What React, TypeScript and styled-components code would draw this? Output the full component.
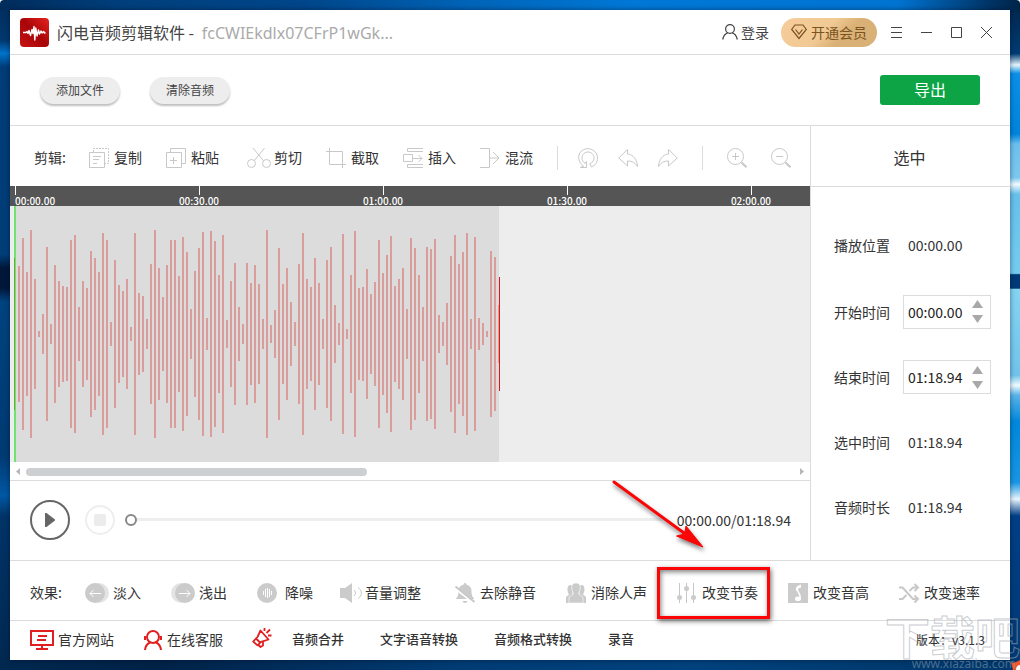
import React, { useState } from "react";
import styled, { createGlobalStyle, css } from "styled-components";

const GlobalStyle = createGlobalStyle`
  *, *::before, *::after { box-sizing: border-box; }
  body {
    margin: 0;
    font-family: "Noto Sans CJK SC", sans-serif;
    font-size: 14px;
    line-height: 20px;
    color: #333;
  }
  button, input { font: inherit; color: inherit; }
  button { padding: 0; border: 0; background: none; cursor: pointer; }
  svg { display: block; flex: none; overflow: visible; }
`;

const line = "#dcdcdc";

/* ---------- desktop and window ---------- */

const Desktop = styled.div`
  position: relative;
  display: flex;
  min-height: 100vh;
  padding: 10px;
  overflow: hidden;
  border-radius: 4px 4px 0 0;
  background:
    linear-gradient(90deg, #002850 0, #002247 15%, #003c74 45%, #00427e 68%, #003a6e 88%, #00386c 100%) bottom / 100% 10px no-repeat,
    linear-gradient(90deg, #002c5c 0, #003f7c 12%, #00468a 30%, #0064b8 46%, #0078d7 62%, #0074d2 88%, #003466 97%, #002448 100%) top / 100% 10px no-repeat,
    linear-gradient(180deg, #002c5c 0, #00386e 6%, #0074cc 8%, #003c78 10%, #003e78 38%, #00173a 40%, #00173a 43%, #00437f 45%, #003a72 68%, #0058a4 74%, #003468 77%, #002850 100%) left / 10px 100% no-repeat,
    linear-gradient(180deg, #002448 0, #003c74 8%, #e4f6ff 9.7%, #0a90e8 11%, #0084dc 20%, #6cc0ee 21.5%, #7cc8f0 26.5%, #f0fbff 27.5%, #66c0ec 29%, #74ccf0 40.8%, #003a78 41%, #003a78 43%, #84d4f2 43.2%, #70c4ec 56%, #f0fbff 57.5%, #58b4e8 59%, #0088dc 63%, #1896e4 72%, #e8f6ff 74.5%, #003f86 77%, #003a74 100%) right / 10px 100% no-repeat,
    #003a72;
`;

const Window = styled.main`
  display: flex;
  flex: 1;
  flex-direction: column;
  min-width: 0;
  background: #fff;
  box-shadow: 0 0 5px rgba(0, 10, 30, 0.5);
`;

const TitleBar = styled.header`
  display: flex;
  align-items: center;
  height: 45px;
  padding: 0 9px 0 10px;
  border-bottom: 1px solid ${line};
`;

const Title = styled.h1`
  flex: 1;
  margin: 0 0 0 8px;
  font-size: 16px;
  font-weight: 400;
  line-height: 24px;
  color: #444;
  white-space: nowrap;
`;

const FileName = styled.span`
  margin-left: 4px;
  font-family: "Noto Sans", sans-serif;
  color: #aaa;
`;

const LoginButton = styled.button`
  display: flex;
  align-items: center;
  gap: 3px;
  margin-right: 12px;
  color: #444;
`;

const VipButton = styled.button`
  display: flex;
  align-items: center;
  justify-content: center;
  gap: 4px;
  width: 96px;
  height: 29px;
  margin-right: 4px;
  border-radius: 15px;
  background: linear-gradient(135deg, #f6cd9b 0%, #f1c994 45%, #d9b075 65%, #d9b075 100%);
  color: #7a5320;
`;

const WindowButton = styled.button`
  display: grid;
  place-items: center;
  width: 30px;
  height: 30px;
  color: #444;
`;

const FileBar = styled.section`
  display: flex;
  align-items: center;
  gap: 30px;
  height: 71px;
  padding: 0 30px;
  border-bottom: 1px solid ${line};
`;

const PillButton = styled.button`
  width: 80px;
  height: 27px;
  border-radius: 14px;
  background: #ededed;
  box-shadow: 0 2px 2px rgba(0, 0, 0, 0.25);
  font-size: 12px;
  color: #444;
`;

const ExportButton = styled.button`
  width: 100px;
  height: 30px;
  margin-left: auto;
  padding-bottom: 2px;
  border-radius: 3px;
  background: #0ca445;
  font-size: 16px;
  color: #fff;
`;

const Workspace = styled.div`
  display: flex;
  flex: 1;
  min-height: 0;
`;

const Editor = styled.section`
  display: flex;
  flex: 1;
  flex-direction: column;
  min-width: 0;
`;

/* ---------- tool rows ---------- */

const EditBar = styled.div`
  display: flex;
  align-items: center;
  height: 60px;
  padding: 4px 0 0 24px;
`;

const EffectBar = styled.section`
  display: flex;
  align-items: center;
  height: 60px;
  padding: 5px 20px 0;
  border-top: 1px solid ${line};
`;

const RowLabel = styled.span`
  flex: none;
  width: 32px;
  margin-right: 23px;
  padding-bottom: 2px;
`;

const Caption = styled.span`
  padding-bottom: 2px;
`;

const ToolGroup = styled.div<{ $gap: number }>`
  display: flex;
  align-items: center;
  gap: ${(p) => p.$gap}px;
`;

const ToolButton = styled.button<{ $marked?: boolean }>`
  display: flex;
  flex: none;
  align-items: center;
  gap: 5px;
  height: 20px;
  white-space: nowrap;
  ${(p) =>
    p.$marked &&
    css`
      position: relative;
      &::after {
        content: "";
        position: absolute;
        inset: -16px -12px -16px -20px;
        border: 3px solid #fb0506;
        box-shadow: 1px 2px 5px rgba(0, 0, 0, 0.6), inset 1px 2px 5px rgba(0, 0, 0, 0.5);
      }
    `}
`;

const Pointer = styled.svg`
  position: absolute;
  left: -64px;
  top: -102px;
  z-index: 2;
  filter: drop-shadow(1px 3px 2px rgba(0, 0, 0, 0.5));
  pointer-events: none;
`;

const Divider = styled.span`
  width: 1px;
  height: 24px;
  background: ${line};
`;

/* ---------- timeline ---------- */

const Ruler = styled.div`
  display: flex;
  height: 20px;
  padding-left: 5px;
  overflow-x: clip;
  background: #555;
`;

const Mark = styled.div<{ $first: boolean }>`
  display: flex;
  flex: none;
  flex-direction: column;
  align-items: ${(p) => (p.$first ? "flex-start" : "center")};
  width: ${(p) => (p.$first ? 92 : 184)}px;
  font-size: 10px;
  font-weight: 500;
  line-height: 11px;
  color: #fff;

  &::before {
    content: "";
    width: 1px;
    height: 9px;
    background: #fff;
  }
`;

const WaveArea = styled.div`
  display: flex;
  flex: 1;
  min-height: 256px;
  padding-left: 4px;
  overflow: hidden;
  background: #ededed;
`;

const Selection = styled.div`
  display: flex;
  align-items: center;
  width: 485px;
  border-left: 2px solid #70e270;
  background: #dcdcdc;
`;

const ScrollRow = styled.div`
  display: flex;
  align-items: center;
  height: 18px;
`;

const ScrollArrow = styled.button`
  display: grid;
  place-items: center;
  width: 16px;
  height: 18px;
`;

const ScrollTrack = styled.div`
  flex: 1;
  padding-top: 2px;
`;

const ScrollThumb = styled.div`
  width: calc(44% + 3px);
  height: 8px;
  border-radius: 4px;
  background: #cecfd1;
`;

const Player = styled.div`
  display: flex;
  align-items: center;
  height: 80px;
  padding: 0 19px 2px 20px;
  border-top: 1px solid ${line};
`;

const PlayButton = styled.button`
  display: grid;
  place-items: center;
  width: 40px;
  height: 40px;
  border: 2px solid #666;
  border-radius: 50%;
`;

const StopButton = styled.button`
  display: grid;
  place-items: center;
  width: 30px;
  height: 30px;
  margin: 0 10px 0 15px;
  border: 2px solid #eee;
  border-radius: 50%;

  &::before {
    content: "";
    width: 12px;
    height: 12px;
    border-radius: 2px;
    background: #ececec;
  }
`;

const Seek = styled.input`
  flex: 1;
  min-width: 0;
  height: 12px;
  margin: 0 14px 0 0;
  appearance: none;
  background: linear-gradient(#eee, #eee) center / 100% 3px no-repeat;

  &::-webkit-slider-thumb {
    appearance: none;
    width: 12px;
    height: 12px;
    border: 2px solid #888;
    border-radius: 50%;
    background: #fff;
  }
`;

/* ---------- side panel ---------- */

const Side = styled.aside`
  display: flex;
  flex: none;
  flex-direction: column;
  width: 200px;
  border-left: 1px solid ${line};
`;

const SideTitle = styled.h2`
  margin: 0;
  padding: 21px 2px 19px 0;
  border-bottom: 1px solid ${line};
  font-size: 16px;
  font-weight: 400;
  line-height: 20px;
  text-align: center;
`;

const FieldList = styled.div`
  display: flex;
  flex: 1;
  flex-direction: column;
  justify-content: space-between;
  padding: 42px 19px 35px 23px;
`;

const Field = styled.div<{ $plain?: boolean }>`
  display: flex;
  align-items: center;
  justify-content: space-between;
  height: 34px;
  padding-bottom: ${(p) => (p.$plain ? 2 : 0)}px;
`;

const Value = styled.output`
  width: 83px;
`;

const Spinner = styled.div`
  display: flex;
  width: 88px;
  height: 34px;
  border: 1px solid ${line};
`;

const TimeInput = styled.input`
  width: 68px;
  padding: 0 0 0 4px;
  border: 0;
  outline: 0;
  background: transparent;
  color: #222;
`;

const Steps = styled.div`
  display: flex;
  flex-direction: column;
  justify-content: center;
  gap: 7px;
`;

/* ---------- footer ---------- */

const Footer = styled.footer`
  display: flex;
  align-items: center;
  height: 40px;
  padding: 0 25px 2px 20px;
  border-top: 1px solid ${line};
`;

const FooterLinks = styled.nav<{ $gap: number }>`
  display: flex;
  align-items: center;
  gap: ${(p) => p.$gap}px;
`;

const IconLink = styled.a<{ $gap: number }>`
  display: flex;
  align-items: center;
  gap: ${(p) => p.$gap}px;
  height: 20px;
  color: #333;
  text-decoration: none;
`;

const TextLink = styled.a`
  padding-bottom: 2px;
  font-size: 13px;
  font-weight: 500;
  color: #333;
  text-decoration: none;
`;

const Promo = styled.span`
  margin: 0 20px 4px 29px;
`;

const Version = styled.span`
  position: relative;
  z-index: 1;
  margin-left: auto;
  font-size: 12px;
`;

const Watermark = styled.div`
  position: absolute;
  right: 0;
  bottom: 4px;
  font-size: 45px;
  font-weight: 700;
  line-height: 60px;
  color: transparent;
  -webkit-text-stroke: 1px rgba(165, 170, 178, 0.6);
  white-space: nowrap;
  pointer-events: none;
`;

const WatermarkUrl = styled.div`
  position: absolute;
  right: 4px;
  bottom: 0;
  font-family: "Noto Sans", sans-serif;
  font-size: 12px;
  line-height: 12px;
  color: rgba(150, 165, 185, 0.5);
  white-space: nowrap;
  pointer-events: none;
`;

const Badge = styled.svg`
  position: absolute;
  right: 0;
  bottom: 0;
`;

/* ---------- icons ---------- */

type GlyphProps = { w?: number; x?: number; children: React.ReactNode };

const Glyph = ({ w = 20, x = 0, children }: GlyphProps) => (
  <svg width={w} height="20" viewBox={`${x} 0 ${w} 20`} fill="none" stroke="#c8c8c8" aria-hidden="true">
    {children}
  </svg>
);

const CopyIcon = () => (
  <Glyph>
    <path d="M.5 4.5h15v15H.5zM4 8.500h8M4 11.500h6M4 15.500h4" />
    <path d="M4.500 4V.5h15v15H16" strokeDasharray="2 1" />
  </Glyph>
);
const PasteIcon = () => (
  <Glyph>
    <path d="M.5 4.500h15v15H.5zM4.500 4.500v-4h15v15h-4M4 12.500h7M7.500 9v7" />
  </Glyph>
);
const CutIcon = () => (
  <Glyph w={26} x={-4}>
    <path d="M6 0l10.500 12.800M17.500 0L7 12.800" />
    <circle cx="4.500" cy="15.500" r="4" />
    <circle cx="19.500" cy="15.500" r="4" />
  </Glyph>
);
const CropIcon = () => (
  <Glyph>
    <path d="M3.500 0v16.500H20M0 3.500h16.500V20" />
  </Glyph>
);
const InsertIcon = () => (
  <Glyph>
    <path d="M20 .5H4.500v3H20M20 19.500H4.500v-3H20M.5 6.500h9v7h-9zM10 10.500h9M15.500 7l3.500 3.500-3.500 3.500" />
  </Glyph>
);
const MixIcon = () => (
  <Glyph>
    <path d="M0 .5h9.500v19H0M9.500 10H19M13 4l6 6-6 6" />
  </Glyph>
);
const ResetIcon = () => (
  <Glyph>
    <path d="M5.500 18C-1 13.500-1 4.800 5.500 1.600 11-1 19.500 2 19.500 10c0 4.500-2.500 7.500-6 9l-1.700-3.300C14.500 14.500 16 13 16 10c0-8-12-8-12 0 0 2 1 4 3 5.500L8.500 13.500v6H2.500z" />
  </Glyph>
);
const UndoIcon = () => (
  <Glyph>
    <path d="M.7 10L9.500 1.500V6c5.500.5 9.500 5 10 12.500-2.500-4-5.500-5.500-10-5.500v5z" />
  </Glyph>
);
const RedoIcon = () => (
  <Glyph>
    <path d="M19.300 10L10.500 1.500V6C5 6.500 1 11 .5 18.500 3 14.500 6 13 10.500 13v5z" />
  </Glyph>
);
const ZoomIcon = ({ plus }: { plus?: boolean }) => (
  <Glyph>
    <circle cx="8.500" cy="8.500" r="8" />
    <path d={plus ? "M5 8.500h7M8.500 5v7" : "M5 8.500h7"} />
    <path d="M14.500 14.500l5 4.800" strokeWidth="2" />
  </Glyph>
);

const FadeInIcon = () => (
  <Glyph w={23}>
    <g stroke="none">
      <circle cx="14" cy="10" r="10" fill="#e4e4e4" />
      <circle cx="10" cy="10" r="10" fill="#cbcbcb" />
    </g>
    <path d="M16 10.500H5M8.500 7L5 10.500 8.500 14" stroke="#fff" />
  </Glyph>
);
const FadeOutIcon = () => (
  <Glyph w={23}>
    <g stroke="none">
      <circle cx="10" cy="10" r="10" fill="#e4e4e4" />
      <circle cx="14" cy="10" r="10" fill="#cbcbcb" />
    </g>
    <path d="M8 10.500h11M15.500 7l3.500 3.500-3.500 3.500" stroke="#fff" />
  </Glyph>
);
const DenoiseIcon = () => (
  <Glyph w={23}>
    <circle cx="10" cy="10" r="10" fill="#cbcbcb" stroke="none" />
    <path d="M6.500 8v4M8.500 6v8M10.500 5v10M12.500 6v8M14.500 8v4" stroke="#fff" />
  </Glyph>
);
const VolumeIcon = () => (
  <Glyph w={17} x={3}>
    <path d="M0 5h5l7-5v20l-7-5H0z" fill="#cbcbcb" stroke="none" />
    <path d="M14 7c2 1.500 2 4.500 0 6M18 4.500c4.500 3 4.500 8 0 11" />
  </Glyph>
);
const MuteIcon = () => (
  <Glyph w={24} x={-4}>
    <path d="M10 0c1 0 1.500.8 1.500 1.800C15 2.500 16.500 5 16.500 8c0 4 .8 6 3 8H.5c2.200-2 3-4 3-8 0-3 1.500-5.500 5-6.200C8.500.8 9 0 10 0zM7.500 18h5c-.5 2.500-4.500 2.500-5 0z" fill="#cbcbcb" stroke="none" />
    <path d="M-.5 4.500l19.500 15" stroke="#fff" strokeWidth="3" />
    <path d="M.5 3.500l19 15.500" strokeWidth="2" />
  </Glyph>
);
const VoiceIcon = () => (
  <Glyph>
    <g fill="#cbcbcb" stroke="none">
      <path d="M4.500 2C6.500 2 7 3 7 5l-.5 5.500L9 13v7H0v-6l3-2.500C1 8.500.5 2 4.500 2zM15.500 2C13.500 2 13 3 13 5l.5 5.500L11 13v7h9v-6l-3-2.500c2-3 2.500-9.500-1.500-9.500z" />
      <path d="M10 0c4 0 4.500 3 4 6-.3 2.500-1 4-1.500 5l4.500 3v6H3v-6l4.500-3C7 10 6.300 8.500 6 6c-.5-3 0-6 4-6z" stroke="#fff" strokeWidth=".6" />
    </g>
  </Glyph>
);
const TempoIcon = () => (
  <Glyph>
    <path d="M2.500 0v20M9.500 0v20M16.500 0v20" />
    <g fill="#cbcbcb" stroke="none">
      <circle cx="2.500" cy="14.500" r="2.500" />
      <circle cx="9.500" cy="5.500" r="2.500" />
      <circle cx="16.500" cy="14.500" r="2.500" />
    </g>
  </Glyph>
);
const PitchIcon = () => (
  <Glyph>
    <path d="M0 0h20v20H0z" fill="#cbcbcb" stroke="none" />
    <path d="M9.300 6c0 3 3 4.500 3 8.500" stroke="#fff" strokeWidth="1.500" />
    <ellipse cx="10" cy="15.800" rx="3" ry="2.300" fill="#fff" stroke="none" />
    <path d="M7.800 7C7.800 3.500 10 2.500 13 1.500V4.500c-2 .5-3.500 1-3.600 4z" fill="#fff" stroke="none" />
  </Glyph>
);
const SpeedIcon = () => (
  <Glyph>
    <g strokeWidth="2">
      <path d="M0 4.500h3.500L14 16h4M0 16h3.500l4-4M10.500 8l3.500-3.500h4" />
      <path d="M15.500 1l3.500 3.500L15.500 8M15.500 12.500L19 16l-3.500 3.500" />
    </g>
  </Glyph>
);

const Logo = () => (
  <svg width="29" height="29" viewBox="0 0 29 29" aria-hidden="true">
    <defs>
      <linearGradient id="logo" x1="0" y1="1" x2="1" y2="0">
        <stop offset="0" stopColor="#c81414" />
        <stop offset=".5" stopColor="#a80508" />
        <stop offset="1" stopColor="#e62320" />
      </linearGradient>
    </defs>
    <rect width="29" height="29" rx="4" fill="url(#logo)" />
    <path d="M3 14.500h3l1-1 1 2 1-3 1.500 5 1.500-6 1 4 1-7 .8 13.500 1-12 1.200 8 1.500-6 1 4 1.500-3 1 2 1.500-1.500 1 1.500 1-.5" fill="none" stroke="#fff" strokeWidth="1.400" strokeLinejoin="round" />
  </svg>
);
const UserIcon = () => (
  <svg width="16" height="16" viewBox="0 0 16 16" fill="none" stroke="#444" strokeWidth="1.200" aria-hidden="true">
    <circle cx="8" cy="5" r="4.400" />
    <path d="M.7 15.500c.8-3.500 3-6 5-6.600M15.300 15.500c-.8-3.500-3-6-5-6.600" />
  </svg>
);
const DiamondIcon = () => (
  <svg width="16" height="16" viewBox="0 0 16 16" fill="none" stroke="#7a5320" strokeWidth="1.200" aria-hidden="true">
    <path d="M4 1h8l3.300 4.500L8 14.500.7 5.500z" />
    <path d="M4.500 5.500L8 10l3.500-4.500" />
  </svg>
);
const MonitorIcon = () => (
  <svg width="24" height="20" viewBox="0 0 24 20" fill="none" stroke="#e02020" strokeWidth="2" aria-hidden="true">
    <path d="M1 1h22v14H1zM12 15v4M6 19h12M8 6h9M7 10h9" />
  </svg>
);
const ServiceIcon = () => (
  <svg width="18" height="20" viewBox="0 0 18 20" fill="none" stroke="#e02020" strokeWidth="2" aria-hidden="true">
    <circle cx="9" cy="7" r="6" />
    <path d="M1 20c.5-4 2.500-6.500 5-7.500M17 20c-.5-4-2.500-6.500-5-7.500M1 6v4M17 6v4" />
  </svg>
);
const MegaphoneIcon = () => (
  <svg width="20" height="20" viewBox="0 0 20 20" fill="none" stroke="#e02020" strokeWidth="1.800" strokeLinejoin="round" aria-hidden="true">
    <path d="M8.500 2.500l8 9-7.500 2.300-3.500 3.500L1.200 13.500 5.500 9zM4 10.500l4 4M6.500 17l2 2 2.500-1.500v-3.500" />
    <path d="M12.500 3V0M14.500 5l3.500-3.500M16 7.500h3.500" />
  </svg>
);
const Triangle = ({ down }: { down?: boolean }) => (
  <svg width="11" height="8" viewBox="0 0 11 8" fill="#a8a8a8" aria-hidden="true">
    <path d={down ? "M0 0h11L5.500 8z" : "M0 8h11L5.500 0z"} />
  </svg>
);

/* ---------- data ---------- */

const levels = [
  68, 96, 62, 104, 55, 3, 20, 87, 10, 69, 53, 48, 47, 94, 99, 27, 53, 46, 83, 76, 62, 101, 94, 12, 74, 49, 43, 55, 7,
  101, 41, 38, 15, 70, 104, 66, 37, 69, 94, 94, 58, 97, 82, 25, 63, 86, 102, 16, 103, 93, 59, 99, 14, 53, 71, 27, 10,
  71, 51, 69, 50, 15, 104, 9, 24, 86, 50, 66, 32, 12, 70, 101, 55, 47, 76, 51, 15, 74, 87, 29, 11, 100, 5, 59, 103,
  46, 47, 65, 40, 52, 94, 61, 79, 98, 48, 55, 66, 25, 96, 86, 59, 27, 87, 85, 95, 19, 12, 31, 78, 99, 70, 82, 101,
  15, 97, 16, 11, 3, 83, 77, 29,
];

const marks = ["00:00.00", "00:30.00", "01:00.00", "01:30.00", "02:00.00"];

const edits = [
  { name: "复制", Icon: CopyIcon },
  { name: "粘贴", Icon: PasteIcon },
  { name: "剪切", Icon: CutIcon },
  { name: "截取", Icon: CropIcon },
  { name: "插入", Icon: InsertIcon },
  { name: "混流", Icon: MixIcon },
];

const effects = [
  { name: "淡入", Icon: FadeInIcon },
  { name: "浅出", Icon: FadeOutIcon },
  { name: "降噪", Icon: DenoiseIcon },
  { name: "音量调整", Icon: VolumeIcon },
  { name: "去除静音", Icon: MuteIcon },
  { name: "消除人声", Icon: VoiceIcon },
  { name: "改变节奏", Icon: TempoIcon, marked: true },
  { name: "改变音高", Icon: PitchIcon },
  { name: "改变速率", Icon: SpeedIcon },
];

const Waveform = () => (
  <svg width="483" height="256" viewBox="0 0 483 256" shapeRendering="crispEdges" role="img" aria-label="波形">
    {levels.map((h, i) => (
      <rect key={i} x={2 + i * 4} y={128 - h} width={i === levels.length - 1 ? 1 : 2} height={h * 2} fill="#d99e9b" />
    ))}
    <rect x="-2" y="52" width="1" height="152" fill="#6fa838" />
    <rect x="483" y="71" width="1" height="114" fill="#e61414" />
  </svg>
);

const TimeField = ({ id, label, initial }: { id: string; label: string; initial: string }) => {
  const [value, setValue] = useState(initial);
  return (
    <Field>
      <label htmlFor={id}>{label}</label>
      <Spinner>
        <TimeInput id={id} value={value} onChange={(e) => setValue(e.target.value)} />
        <Steps>
          <button aria-label={`${label}增加`}><Triangle /></button>
          <button aria-label={`${label}减少`}><Triangle down /></button>
        </Steps>
      </Spinner>
    </Field>
  );
};

const ReadOnlyField = ({ label, value }: { label: string; value: string }) => (
  <Field $plain>
    <span>{label}</span>
    <Value>{value}</Value>
  </Field>
);

export default function App() {
  const [position, setPosition] = useState(0);
  return (
    <Desktop>
      <GlobalStyle />
      <Window>
        <TitleBar>
          <Logo />
          <Title>
            闪电音频剪辑软件 - <FileName>fcCWIEkdlx07CFrP1wGk...</FileName>
          </Title>
          <LoginButton><UserIcon />登录</LoginButton>
          <VipButton><DiamondIcon />开通会员</VipButton>
          <WindowButton aria-label="菜单">
            <svg width="11" height="11" stroke="currentColor"><path d="M0 .5h11M0 5.500h11M0 10.500h11" /></svg>
          </WindowButton>
          <WindowButton aria-label="最小化">
            <svg width="11" height="11" stroke="currentColor"><path d="M0 5.500h11" /></svg>
          </WindowButton>
          <WindowButton aria-label="最大化">
            <svg width="11" height="11" fill="none" stroke="currentColor"><path d="M.5.500h10v10H.5z" /></svg>
          </WindowButton>
          <WindowButton aria-label="关闭">
            <svg width="11" height="11" stroke="currentColor"><path d="M0 0l11 11M11 0L0 11" /></svg>
          </WindowButton>
        </TitleBar>

        <FileBar>
          <PillButton>添加文件</PillButton>
          <PillButton>清除音频</PillButton>
          <ExportButton>导出</ExportButton>
        </FileBar>

        <Workspace>
          <Editor>
            <EditBar>
              <RowLabel>剪辑:</RowLabel>
              <ToolGroup $gap={24}>
                {edits.map(({ name, Icon }) => (
                  <ToolButton key={name}><Icon /><Caption>{name}</Caption></ToolButton>
                ))}
                <ToolGroup $gap={20}>
                  <Divider />
                  <ToolButton aria-label="重置"><ResetIcon /></ToolButton>
                  <ToolButton aria-label="撤销"><UndoIcon /></ToolButton>
                  <ToolButton aria-label="恢复"><RedoIcon /></ToolButton>
                </ToolGroup>
                <Divider />
                <ToolButton aria-label="放大"><ZoomIcon plus /></ToolButton>
                <ToolButton aria-label="缩小"><ZoomIcon /></ToolButton>
              </ToolGroup>
            </EditBar>

            <Ruler>
              {marks.map((m, i) => (
                <Mark key={m} $first={i === 0}>{m}</Mark>
              ))}
            </Ruler>
            <WaveArea>
              <Selection><Waveform /></Selection>
            </WaveArea>
            <ScrollRow>
              <ScrollArrow aria-label="向左滚动">
                <svg width="4" height="7" fill="#b4b8bc"><path d="M4 0v7L0 3.500z" /></svg>
              </ScrollArrow>
              <ScrollTrack><ScrollThumb /></ScrollTrack>
              <ScrollArrow aria-label="向右滚动">
                <svg width="4" height="7" fill="#b4b8bc"><path d="M0 0v7l4-3.500z" /></svg>
              </ScrollArrow>
            </ScrollRow>

            <Player>
              <PlayButton aria-label="播放">
                <svg width="10" height="14" viewBox="0 0 10 14" fill="#666"><path d="M1.500 0L10 6.500v1L1.500 14H0V0z" /></svg>
              </PlayButton>
              <StopButton aria-label="停止" />
              <Seek
                type="range"
                aria-label="播放进度"
                min={0}
                max={100}
                value={position}
                onChange={(e) => setPosition(Number(e.target.value))}
              />
              <span>00:00.00/01:18.94</span>
            </Player>
          </Editor>

          <Side>
            <SideTitle>选中</SideTitle>
            <FieldList>
              <ReadOnlyField label="播放位置" value="00:00.00" />
              <TimeField id="start" label="开始时间" initial="00:00.00" />
              <TimeField id="end" label="结束时间" initial="01:18.94" />
              <ReadOnlyField label="选中时间" value="01:18.94" />
              <ReadOnlyField label="音频时长" value="01:18.94" />
            </FieldList>
          </Side>
        </Workspace>

        <EffectBar>
          <RowLabel>效果:</RowLabel>
          <ToolGroup $gap={30}>
            {effects.map(({ name, Icon, marked }) => (
              <ToolButton key={name} $marked={marked}>
                <Icon />
                <Caption>{name}</Caption>
                {marked && (
                  <Pointer width="92" height="70" viewBox="0 0 92 70" aria-hidden="true">
                    <path d="M1 1l70 51" stroke="#fb0506" strokeWidth="3" strokeLinecap="round" />
                    <path d="M90 66l-26.500-11 8-2 1.500-8z" fill="#fb0506" stroke="#fb0506" />
                  </Pointer>
                )}
              </ToolButton>
            ))}
          </ToolGroup>
        </EffectBar>

        <Footer>
          <FooterLinks $gap={30}>
            <IconLink href="#site" $gap={4}><MonitorIcon /><Caption>官方网站</Caption></IconLink>
            <IconLink href="#service" $gap={5}><ServiceIcon /><Caption>在线客服</Caption></IconLink>
          </FooterLinks>
          <Promo><MegaphoneIcon /></Promo>
          <FooterLinks $gap={36}>
            <TextLink href="#merge">音频合并</TextLink>
            <TextLink href="#speech">文字语音转换</TextLink>
            <TextLink href="#convert">音频格式转换</TextLink>
            <TextLink href="#record">录音</TextLink>
          </FooterLinks>
          <Version>版本：v3.1.3</Version>
        </Footer>
      </Window>
      <Badge width="9" height="10" viewBox="0 0 9 10" aria-hidden="true">
        <path d="M0 2l3 1 6-3v10H2z" fill="#f0562a" />
        <path d="M5 10c0-3 1.500-5 4-5v5z" fill="#fff" />
      </Badge>
      <Watermark>下载吧</Watermark>
      <WatermarkUrl>www.xiazaiba.com</WatermarkUrl>
    </Desktop>
  );
}
